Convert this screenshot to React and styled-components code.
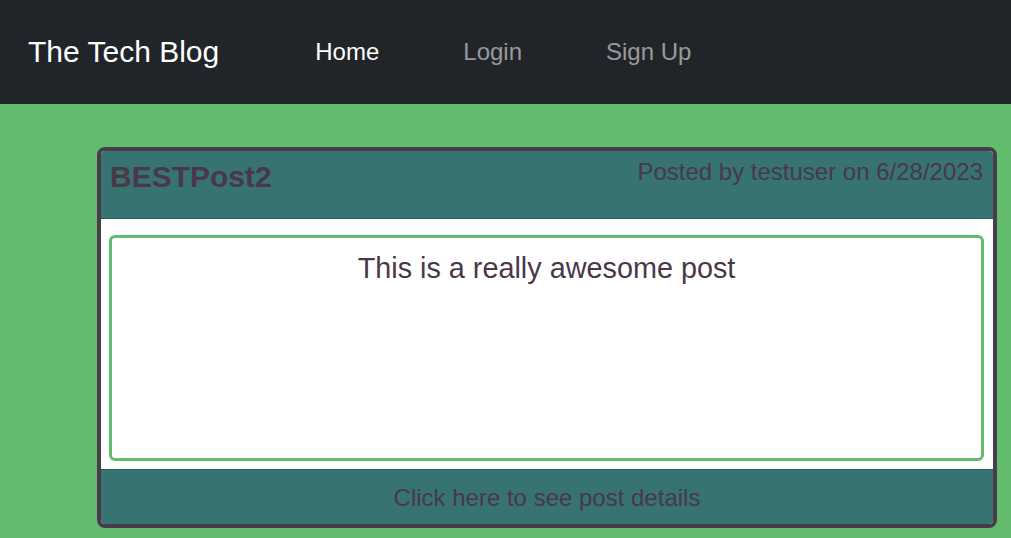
import * as React from 'react';
import styled, { createGlobalStyle } from 'styled-components';

const GlobalStyle = createGlobalStyle`
  html, body {
    margin: 0;
    padding: 0;
    background: #61bd6d;
    font-family: "Liberation Sans", Arial, sans-serif;
  }
  * { box-sizing: border-box; }
`;

const post = {
  title: 'BESTPost2',
  author: 'testuser',
  date: '6/28/2023',
  content: 'This is a really awesome post',
};

function App() {
  return (
    <>
      <GlobalStyle />
      <Navbar>
        <Brand href="#">The Tech Blog</Brand>
        <NavLinks>
          <NavLink href="#" active>Home</NavLink>
          <NavLink href="#">Login</NavLink>
          <NavLink href="#">Sign Up</NavLink>
        </NavLinks>
      </Navbar>
      <Main>
        <Card>
          <CardHeader>
            <Title>{post.title}</Title>
            <Meta>
              Posted by {post.author} on {post.date}
            </Meta>
          </CardHeader>
          <CardBody>
            <Content>{post.content}</Content>
          </CardBody>
          <CardFooter href="#">Click here to see post details</CardFooter>
        </Card>
      </Main>
    </>
  );
}
export default App;

const Navbar = styled.nav`
  height: 104px;
  background: #212529;
  display: flex;
  align-items: center;
  padding: 0 0 0 28px;
`;

const Brand = styled.a`
  color: #fff;
  font-size: 30px;
  text-decoration: none;
  margin-right: 54px;
`;

const NavLinks = styled.div`
  display: flex;
  align-items: center;
`;

const NavLink = styled.a`
  font-size: 24px;
  padding: 0 42px;
  text-decoration: none;
  color: ${(p) => (p.active ? '#fff' : 'rgba(255, 255, 255, 0.55)')};
`;

const Main = styled.main`
  padding: 43px 14px 0 97px;
`;

const Card = styled.div`
  width: 900px;
  border: 4px solid #4a3a4a;
  border-radius: 8px;
  overflow: hidden;
  background: #fff;
  color: #4a3848;
`;

const CardHeader = styled.div`
  height: 68px;
  background: #367371;
  border-bottom: 1px solid #2c5c5b;
  display: flex;
  justify-content: space-between;
  align-items: flex-start;
  padding: 5px 10px 0 9px;
`;

const Title = styled.h2`
  margin: 3px 0 0;
  font-size: 30px;
  font-weight: bold;
  line-height: 36px;
`;

const Meta = styled.p`
  margin: 2px 0 0;
  font-size: 24px;
  line-height: 1.15;
`;

const CardBody = styled.div`
  padding: 16px 9px 8px 8px;
`;

const Content = styled.div`
  height: 226px;
  border: 3px solid #61bd6d;
  border-radius: 6px;
  text-align: center;
  font-size: 28.8px;
  line-height: 1.2;
  padding-top: 13px;
`;

const CardFooter = styled.a`
  display: flex;
  align-items: center;
  justify-content: center;
  height: 55px;
  padding-top: 2px;
  background: #367371;
  border-top: 1px solid #2c5c5b;
  color: #4a3848;
  font-size: 24px;
  text-decoration: none;
`;
